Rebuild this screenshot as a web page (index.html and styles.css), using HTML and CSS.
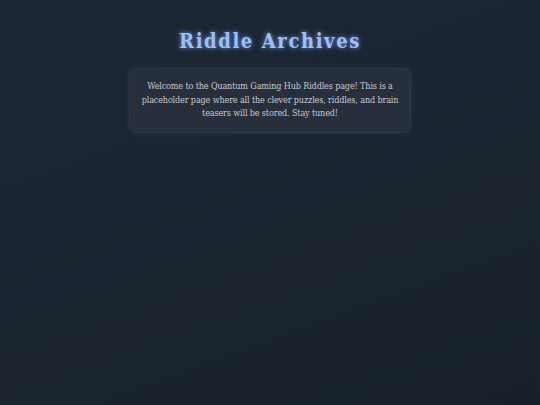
FILE: index.html
```html
<!DOCTYPE html>
<html lang="en">
<head>
<meta charset="utf-8">
<title>Riddle Archives</title>
<link rel="stylesheet" href="styles.css">
</head>
<body>
<main class="page">
  <h1 class="title">Riddle Archives</h1>
  <section class="card">
    <p class="intro">Welcome to the Quantum Gaming Hub Riddles page! This is a placeholder page where all the clever puzzles, riddles, and brain teasers will be stored. Stay tuned!</p>
  </section>
</main>
</body>
</html>
```

FILE: styles.css
```css
html, body {
  margin: 0;
  height: 100%;
}

body {
  background: linear-gradient(160deg, #1d2734 0%, #1b2531 45%, #18212a 100%);
  font-family: "Roboto Slab", "DejaVu Serif Condensed", "DejaVu Serif", serif;
  font-stretch: condensed;
  color: #c9cdd3;
}

.page {
  display: flex;
  flex-direction: column;
  align-items: center;
  padding-top: 28px;
}

.title {
  margin: 0;
  font-size: 20px;
  font-weight: 700;
  letter-spacing: 1.6px;
  color: #9fbef2;
  text-shadow: 0 0 4px rgba(120, 160, 240, 0.75), 0 0 8px rgba(100, 150, 240, 0.35);
  line-height: 26px;
}

.card {
  margin-top: 14px;
  width: 282px;
  box-sizing: border-box;
  padding: 11px 8px 11px;
  background: #262f3b;
  border: 1px solid #2c3747;
  border-radius: 7px;
  box-shadow: 0 0 6px rgba(80, 120, 180, 0.18);
}

.intro {
  margin: 0;
  font-size: 9px;
  letter-spacing: -0.15px;
  line-height: 13.5px;
  text-align: center;
  color: #c6cad0;
}
```
